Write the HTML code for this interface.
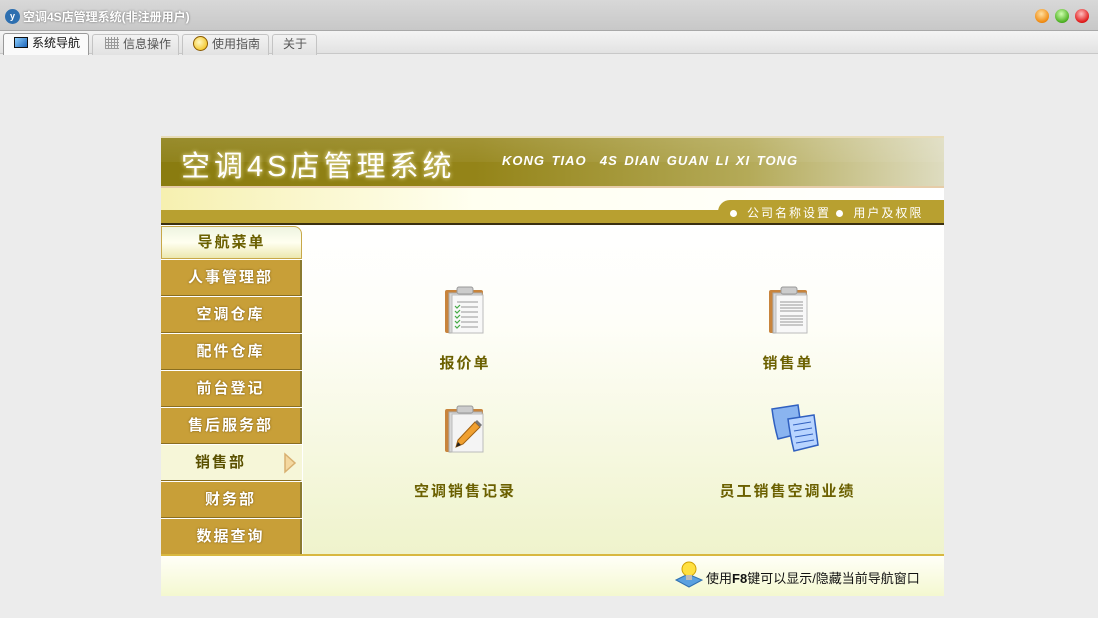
<!DOCTYPE html>
<html><head><meta charset="utf-8"><style>
*{margin:0;padding:0;box-sizing:border-box}
body{width:1098px;height:618px;overflow:hidden;background:#ececec;font-family:"Liberation Sans","Noto Sans CJK SC",sans-serif;position:relative}
.a{position:absolute}
.title{left:0;top:0;width:1098px;height:31px;background:linear-gradient(#d8d8d8,#c8c8c8);border-bottom:1px solid #a8a8a8}
.tabs{left:0;top:31px;width:1098px;height:23px;background:linear-gradient(#f4f4f4,#e2e2e2);border-bottom:1px solid #c8c8c8}
.tab{position:absolute;top:3px;height:21px;border:1px solid #c4c4c4;border-bottom:none;border-radius:3px 3px 0 0;background:linear-gradient(#f2f2f2,#e2e2e2);font-size:12px;color:#555;line-height:19px}
.nav{left:161px;width:141px;height:36px;background:#c89f38;border-bottom:1px solid #8a6e20;border-right:2px solid #8a7a30;color:#fff;font-weight:bold;font-size:15px;letter-spacing:2px;text-align:center;line-height:36px;text-shadow:0 0 2px #7a5a10}
.lbl{font-size:15px;font-weight:bold;color:#6b6000;letter-spacing:2px;text-align:center}
.dot{display:inline-block;width:7px;height:7px;border-radius:50%;background:#fff;margin:0 10px 1px 0;vertical-align:middle}
</style></head><body>
<div class="a title"></div>
<div class="a" style="left:5px;top:9px;width:15px;height:15px;border-radius:50%;background:#2d6fb0;color:#fff;font-size:9px;font-weight:bold;text-align:center;line-height:15px">y</div>
<div class="a" style="left:23px;top:8px;font-size:12px;font-weight:bold;color:#fff;text-shadow:0 0 2px #666">空调4S店管理系统(非注册用户)</div>
<div class="a" style="left:1035px;top:9px;width:14px;height:14px;border-radius:50%;background:radial-gradient(circle at 45% 35%,#ffe0a0,#f08a10 70%,#b05a00)"></div>
<div class="a" style="left:1055px;top:9px;width:14px;height:14px;border-radius:50%;background:radial-gradient(circle at 45% 35%,#d0ffb0,#4cb020 70%,#206000)"></div>
<div class="a" style="left:1075px;top:9px;width:14px;height:14px;border-radius:50%;background:radial-gradient(circle at 45% 35%,#ffc0c0,#e01818 70%,#800000)"></div>
<div class="a tabs"></div>
<div class="tab" style="left:3px;top:33px;width:86px;height:22px;background:#fafafa;color:#111;border-color:#999"><span style="display:inline-block;width:14px;height:11px;border:1px solid #111;background:linear-gradient(135deg,#8fd0ff,#1c64b8);margin:0 4px 0 10px;vertical-align:-1px"></span>系统导航</div>
<div class="tab" style="left:92px;top:34px;width:87px"><span style="display:inline-block;width:14px;height:12px;margin:0 4px 0 12px;vertical-align:-1px;background:repeating-linear-gradient(90deg,#999 0 1px,transparent 1px 3px),repeating-linear-gradient(0deg,#999 0 1px,transparent 1px 3px)"></span>信息操作</div>
<div class="tab" style="left:182px;top:34px;width:87px"><span style="display:inline-block;width:15px;height:15px;border-radius:50%;border:1px solid #8a5a00;background:radial-gradient(circle at 40% 40%,#fff8c0,#f0b800);margin:0 4px 0 10px;vertical-align:-3px"></span>使用指南</div>
<div class="tab" style="left:272px;top:34px;width:45px;padding-left:10px">关于</div>

<div class="a" style="left:161px;top:136px;width:783px;height:460px;background:#fff"></div>
<div class="a" style="left:161px;top:136px;width:783px;height:52px;background:linear-gradient(90deg,#8a7c10 0%,#948418 40%,#b4aa58 75%,#dedcc0 100%);border-top:2px solid #e8dcb8;border-bottom:2px solid #e6cca8"></div>
<div class="a" style="left:161px;top:138px;width:783px;height:24px;background:linear-gradient(rgba(255,255,255,.12),rgba(255,255,255,.05))"></div>
<div class="a" style="left:181px;top:143px;font-size:29px;color:#fff;letter-spacing:4px;text-shadow:0 0 4px #f8f0b0">空调4S店管理系统</div>
<div class="a" style="left:502px;top:153px;font-size:13px;font-weight:bold;font-style:italic;color:#fff;letter-spacing:1px;word-spacing:2px">KONG TIAO &nbsp;4S DIAN GUAN LI XI TONG</div>
<div class="a" style="left:161px;top:188px;width:783px;height:22px;background:linear-gradient(90deg,#f6f0b0,#fffff0 40%,#fff)"></div>
<div class="a" style="left:161px;top:210px;width:783px;height:13px;background:#b8a030"></div>
<div class="a" style="left:718px;top:200px;width:226px;height:23px;background:#b8a030;border-radius:12px 0 0 0"></div>
<div class="a" style="left:730px;top:204px;font-size:12px;color:#fff;letter-spacing:2px"><span class="dot"></span>公司名称设置 <span class="dot"></span>用户及权限</div>
<div class="a" style="left:161px;top:223px;width:783px;height:2px;background:#3a3010"></div>

<div class="a" style="left:303px;top:225px;width:641px;height:329px;background:linear-gradient(#fff,#fefef8 30%,#eff3cc)"></div>
<div class="a" style="left:161px;top:554px;width:783px;height:2px;background:#d8b840"></div>
<div class="a" style="left:161px;top:556px;width:783px;height:40px;background:linear-gradient(#fffff8,#f4f8d0)"></div>

<div class="a" style="left:161px;top:226px;width:141px;height:33px;border:1px solid #c8a848;border-radius:0 8px 0 0;background:linear-gradient(#eef4e0,#fffff0 50%,#ece8b0);text-align:center;line-height:31px;font-size:15px;font-weight:bold;color:#6b6000;letter-spacing:2px">导航菜单</div>
<div class="a nav" style="top:260px">人事管理部</div>
<div class="a nav" style="top:297px">空调仓库</div>
<div class="a nav" style="top:334px">配件仓库</div>
<div class="a nav" style="top:371px">前台登记</div>
<div class="a nav" style="top:408px">售后服务部</div>
<div class="a nav" style="top:445px;background:#f6f6d8;color:#5a5000;text-shadow:none;border-right:2px solid #f6f6d8;padding-right:20px">销售部</div>
<svg class="a" style="left:283px;top:452px" width="14" height="22"><path d="M2 2 L12 11 L2 20 Z" fill="#f4d8a0" stroke="#d8b070" stroke-width="1.5"/></svg>
<div class="a nav" style="top:482px">财务部</div>
<div class="a nav" style="top:519px;height:35px;border-bottom:none">数据查询</div>

<svg class="a" style="left:443px;top:286px" width="44" height="50">
 <rect x="2" y="4" width="38" height="43" rx="2" fill="#c8843c"/>
 <rect x="6" y="7" width="33" height="40" fill="#d8d8d8" stroke="#aaa"/>
 <rect x="9" y="9" width="31" height="38" fill="#f8f8f8" stroke="#bbb"/>
 <rect x="14" y="1" width="16" height="7" rx="2" fill="#ccc" stroke="#999"/>
 <g stroke="#999" stroke-width="1"><line x1="14" y1="16" x2="35" y2="16"/><line x1="18" y1="21" x2="35" y2="21"/><line x1="18" y1="26" x2="35" y2="26"/><line x1="18" y1="31" x2="35" y2="31"/><line x1="18" y1="36" x2="35" y2="36"/><line x1="18" y1="41" x2="35" y2="41"/></g>
 <g stroke="#4a4" stroke-width="1.2" fill="none"><path d="M12 20l2 2 3-3M12 25l2 2 3-3M12 30l2 2 3-3M12 35l2 2 3-3M12 40l2 2 3-3"/></g>
</svg>
<svg class="a" style="left:767px;top:286px" width="44" height="50">
 <rect x="2" y="4" width="38" height="43" rx="2" fill="#c8843c"/>
 <rect x="6" y="7" width="33" height="40" fill="#d8d8d8" stroke="#aaa"/>
 <rect x="9" y="9" width="31" height="38" fill="#f8f8f8" stroke="#bbb"/>
 <rect x="14" y="1" width="16" height="7" rx="2" fill="#ccc" stroke="#999"/>
 <g stroke="#999"><line x1="13" y1="16" x2="36" y2="16"/><line x1="13" y1="19" x2="36" y2="19"/><line x1="13" y1="22" x2="36" y2="22"/><line x1="13" y1="25" x2="36" y2="25"/><line x1="13" y1="30" x2="36" y2="30"/><line x1="13" y1="33" x2="36" y2="33"/><line x1="13" y1="36" x2="36" y2="36"/><line x1="13" y1="39" x2="36" y2="39"/></g>
</svg>
<svg class="a" style="left:443px;top:405px" width="44" height="50">
 <rect x="2" y="4" width="38" height="43" rx="2" fill="#c8843c"/>
 <rect x="6" y="7" width="33" height="40" fill="#d8d8d8" stroke="#aaa"/>
 <rect x="9" y="9" width="31" height="38" fill="#f4f4f4" stroke="#bbb"/>
 <rect x="14" y="1" width="16" height="7" rx="2" fill="#ccc" stroke="#999"/>
 <path d="M13 42 L15 35 L32 17 L37 22 L20 39 Z" fill="#f0a030" stroke="#a06010"/>
 <path d="M13 42 L15 37 L18 40 Z" fill="#222"/>
 <path d="M32 17 L34 15 L39 20 L37 22 Z" fill="#777"/>
</svg>
<svg class="a" style="left:768px;top:403px" width="56" height="52">
 <path d="M4 6 L30 2 L34 30 L10 36 Q6 22 4 6 Z" fill="#8ab4f0" stroke="#3060c0" stroke-width="1.5"/>
 <path d="M20 16 L46 12 L50 42 L26 48 Q22 32 20 16 Z" fill="#b8d4ff" stroke="#3060c0" stroke-width="1.5"/>
 <g stroke="#3060c0"><line x1="25" y1="22" x2="43" y2="19"/><line x1="26" y1="28" x2="44" y2="25"/><line x1="27" y1="34" x2="45" y2="31"/><line x1="28" y1="40" x2="46" y2="37"/></g>
</svg>
<div class="a lbl" style="left:405px;top:352px;width:120px">报价单</div>
<div class="a lbl" style="left:728px;top:352px;width:120px">销售单</div>
<div class="a lbl" style="left:390px;top:480px;width:150px">空调销售记录</div>
<div class="a lbl" style="left:700px;top:480px;width:175px">员工销售空调业绩</div>

<svg class="a" style="left:674px;top:560px" width="30" height="28">
 <path d="M2 20 L14 14 L28 20 L15 27 Z" fill="#5aa0e0" stroke="#3070b0"/>
 <circle cx="15" cy="9" r="7" fill="#ffe040" stroke="#d0a000"/>
 <rect x="12" y="15" width="6" height="5" fill="#bbb"/>
</svg>
<div class="a" style="left:706px;top:568px;font-size:13px;color:#111">使用<b>F8</b>键可以显示/隐藏当前导航窗口</div>
</body></html>
